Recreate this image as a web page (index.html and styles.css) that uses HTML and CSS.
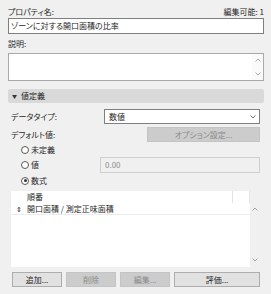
FILE: index.html
```html
<!DOCTYPE html>
<html lang="ja">
<head>
  <meta charset="UTF-8">
  <title>プロパティ</title>
  <link rel="stylesheet" href="styles.css">
</head>
<body>
  <div class="panel">

    <!-- Name -->
    <div class="top-row">
      <span>プロパティ名:</span>
      <span>編集可能: 1</span>
    </div>
    <div class="field">ゾーンに対する開口面積の比率</div>

    <!-- Description -->
    <div class="label">説明:</div>
    <div class="memo">
      <div class="memo-scroll">
        <svg width="6" height="4" viewBox="0 0 6 4"><polyline points="0.5,3.5 3,1 5.5,3.5" /></svg>
        <svg width="6" height="4" viewBox="0 0 6 4"><polyline points="0.5,0.5 3,3 5.5,0.5" /></svg>
      </div>
    </div>

    <!-- Value definition -->
    <div class="section"><span class="caret">▼</span>値定義</div>

    <div class="def">
      <div class="def-row type-row">
        <span class="def-label">データタイプ:</span>
        <div class="select">
          <span>数値</span>
          <svg width="6" height="4" viewBox="0 0 6 4"><polyline points="0.5,0.5 3,3 5.5,0.5" /></svg>
        </div>
      </div>
      <div class="def-row opt-row">
        <span class="def-label">デフォルト値:</span>
        <div class="btn disabled opt-btn">オプション設定...</div>
      </div>

      <div class="radio-row r1">
        <span class="radio"></span>未定義
      </div>
      <div class="radio-row r2">
        <span class="radio"></span><span class="radio-text">値</span>
        <div class="value-box">0.00</div>
      </div>
      <div class="radio-row r3">
        <span class="radio checked"></span>数式
      </div>

      <div class="list">
        <div class="list-body">
          <div class="list-head">
            <span class="col-main">順番</span>
            <span class="col-end"></span>
          </div>
          <div class="list-item">
            <span class="handle">⇕</span>
            <span>開口面積 / 測定正味面積</span>
          </div>
        </div>
        <div class="list-scroll">
          <svg width="6" height="4" viewBox="0 0 6 4"><polyline points="0.5,3.5 3,1 5.5,3.5" /></svg>
          <svg width="6" height="4" viewBox="0 0 6 4"><polyline points="0.5,0.5 3,3 5.5,0.5" /></svg>
        </div>
      </div>

      <div class="buttons">
        <div class="btn">追加...</div>
        <div class="btn disabled">削除</div>
        <div class="btn disabled">編集...</div>
        <div class="btn">評価...</div>
      </div>
    </div>

  </div>
</body>
</html>
```

FILE: styles.css
```css
/* General */
body {
  margin: 0;
  background-color: #f0f0f0;
  font-family: "Noto Sans CJK JP", "Noto Sans", sans-serif;
  font-size: 8px;
  line-height: 10px;
  color: #262626;
  font-feature-settings: "palt";
}

.panel {
  width: 271px;
  height: 294px;
  box-sizing: border-box;
  padding: 7px 7px 0 8px;
}

.top-row {
  display: flex;
  justify-content: space-between;
  height: 10px;
}

.field {
  margin-top: 1px;
  height: 16px;
  box-sizing: border-box;
  border: 1px solid #7f7f7f;
  background-color: #fff;
  padding: 2px 2px;
  line-height: 10px;
}

.label {
  margin-top: 5px;
  height: 10px;
}

.memo {
  margin-top: 4px;
  height: 28px;
  box-sizing: border-box;
  border: 1px solid #a9a9a9;
  background-color: #fff;
  display: flex;
  justify-content: flex-end;
}

.memo-scroll {
  width: 11px;
  display: flex;
  flex-direction: column;
  justify-content: space-between;
  align-items: center;
  padding: 4px 0 4px;
  background-color: #fafafa;
}

svg polyline {
  fill: none;
  stroke: #a6a6a6;
  stroke-width: 1;
}

/* Section header */
.section {
  margin-top: 8px;
  height: 14px;
  background-color: #d9d9d9;
  border-radius: 2px;
  display: flex;
  align-items: center;
  padding-left: 4px;
}

.caret {
  font-size: 5px;
  margin-right: 4px;
  color: #333;
}

/* Definition block */
.def {
  padding: 0 4px 0 3px;
}

.def-row {
  display: flex;
  align-items: center;
}

.def-label {
  width: 93px;
}

.type-row {
  margin-top: 6px;
  height: 15px;
}

.select {
  flex: 1;
  height: 15px;
  box-sizing: border-box;
  border: 1px solid #7f7f7f;
  background-color: #fff;
  display: flex;
  align-items: center;
  justify-content: space-between;
  padding: 0 3px 0 4px;
}

.select polyline {
  stroke: #707070;
}

.opt-row {
  margin-top: 3px;
  height: 15px;
}

.opt-btn {
  margin-left: auto;
  width: 113px;
}

.btn {
  height: 15px;
  box-sizing: border-box;
  border: 1px solid #adadad;
  background-color: #e1e1e1;
  display: flex;
  align-items: center;
  justify-content: center;
}

.btn.disabled {
  background-color: #cccccc;
  border-color: #c4c4c4;
  color: #8a8a8a;
}

/* Radios */
.radio-row {
  display: flex;
  align-items: center;
  padding-left: 10px;
  height: 15px;
}

.r2 {
  height: 16px;
}

.radio {
  width: 8px;
  height: 8px;
  box-sizing: border-box;
  border: 1px solid #5a5a5a;
  border-radius: 50%;
  background-color: #fff;
  margin-right: 2px;
  position: relative;
}

.radio.checked::after {
  content: "";
  position: absolute;
  left: 1.5px;
  top: 1.5px;
  width: 3px;
  height: 3px;
  border-radius: 50%;
  background-color: #333;
}

.radio-text {
  width: 69px;
}

.value-box {
  flex: 1;
  height: 16px;
  box-sizing: border-box;
  border: 1px solid #cfcfcf;
  color: #8c8c8c;
  display: flex;
  align-items: center;
  padding-left: 4px;
}

/* List */
.list {
  margin-top: 3px;
  height: 76px;
  display: flex;
}

.list-body {
  flex: 1;
  background-color: #fff;
}

.list-head {
  height: 12px;
  display: flex;
}

.col-main {
  flex: 1;
  padding-left: 16px;
  line-height: 12px;
  border-right: 1px solid #e3e3e3;
}

.col-end {
  width: 16px;
  border-right: 1px solid #e3e3e3;
}

.list-item {
  height: 12px;
  box-sizing: border-box;
  border-bottom: 1px solid #ececec;
  display: flex;
  align-items: center;
}

.handle {
  width: 16px;
  text-align: center;
  font-size: 7px;
}

.list-scroll {
  width: 10px;
  margin-top: 12px;
  display: flex;
  flex-direction: column;
  justify-content: space-between;
  align-items: center;
  padding: 4px 0 5px;
}

/* Bottom buttons */
.buttons {
  margin-top: 5px;
  display: grid;
  grid-template-columns: 50px 50px 50px 1fr;
  column-gap: 4px;
  padding-left: 1px;
}
```
